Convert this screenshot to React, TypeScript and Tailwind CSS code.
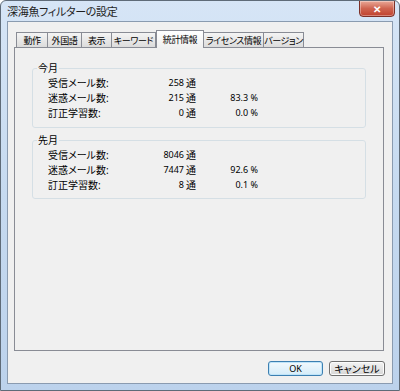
import React from "react";

const tabs = [
  { label: "動作", w: "w-[32px]" },
  { label: "外国語", w: "w-[35px]" },
  { label: "表示", w: "w-[31px]" },
  { label: "キーワード", w: "w-[45px]" },
  { label: "統計情報", w: "w-[48px]", active: true },
  { label: "ライセンス情報", w: "w-[61px]" },
  { label: "バージョン", w: "w-[41px]" },
];

const groups = [
  {
    title: "今月",
    rows: [
      { label: "受信メール数:", count: "258", pct: "" },
      { label: "迷惑メール数:", count: "215", pct: "83.3 %" },
      { label: "訂正学習数:", count: "0", pct: "0.0 %" },
    ],
  },
  {
    title: "先月",
    rows: [
      { label: "受信メール数:", count: "8046", pct: "" },
      { label: "迷惑メール数:", count: "7447", pct: "92.6 %" },
      { label: "訂正学習数:", count: "8", pct: "0.1 %" },
    ],
  },
];

const font = "font-['Noto_Sans','Noto_Sans_CJK_JP',sans-serif] [font-feature-settings:'palt']";

const App = () => {
  return (
    <div
      className={`relative w-[400px] h-[391px] flex flex-col overflow-hidden rounded-t-[6px] border border-[#5f6b78] bg-gradient-to-b from-[#d6e5f6] via-[#c6daf0] to-[#bcd2ec] text-[#000] ${font}`}
    >
      {/* title bar */}
      <div className="h-[20px] flex items-center pl-[6px] text-[11px] tracking-[-0.3px] leading-none text-[#1e1e1e] whitespace-nowrap">
        深海魚フィルターの設定
      </div>
      <div className="absolute top-[-1px] right-[4px] w-[36px] h-[17px] rounded-b-[4px] border border-[#7d3128] bg-gradient-to-b from-[#e9a898] via-[#cf6450] to-[#c0412d] flex items-center justify-center text-white text-[10px] font-bold leading-none shadow-[inset_0_0_0_1px_rgba(255,255,255,0.35)]">
        ✕
      </div>

      {/* client area */}
      <div className="mx-[6px] mb-[6px] flex-1 flex flex-col bg-[#f0f0f0] border border-[#8a9bb0] pt-[8px] pl-[6px] pr-[8px]">
        {/* tab strip */}
        <div className="flex items-end h-[17px] pl-[2px]">
          {tabs.map((t) =>
            t.active ? (
              <div
                key={t.label}
                className={`${t.w} h-[18px] -mb-px relative z-10 border border-b-0 border-[#898c95] bg-gradient-to-b from-[#ffffff] to-[#f0f0f0] flex items-center justify-center text-[9px] tracking-[-0.4px] leading-none whitespace-nowrap`}
              >
                {t.label}
              </div>
            ) : (
              <div
                key={t.label}
                className={`${t.w} h-[15px] border border-b-0 border-[#898c95] -ml-px first:ml-0 bg-gradient-to-b from-[#f4f4f4] to-[#dcdcdc] flex items-center justify-center text-[9px] tracking-[-0.4px] leading-none whitespace-nowrap`}
              >
                {t.label}
              </div>
            )
          )}
        </div>

        {/* panel */}
        <div className="h-[304px] border border-[#898c95] bg-[#f0f0f0] pt-[13px] px-[17px]">
          {groups.map((g, gi) => (
            <fieldset
              key={g.title}
              className={`border border-[#d5dfe5] rounded-[3px] ${gi === 0 ? "pb-[7px]" : "mt-[5px] pb-[6px]"}`}
            >
              <legend className="ml-[4px] px-[1px] h-[14px] text-[10px] leading-[14px]">{g.title}</legend>
              {g.rows.map((r) => (
                <div key={r.label} className="flex items-center h-[15px] pl-[15px] text-[10px] leading-none whitespace-nowrap">
                  <span className="w-[100px]">{r.label}</span>
                  <span className="w-[36px] text-right text-[9px]">{r.count}</span>
                  <span className="ml-[2px]">通</span>
                  <span className="w-[62px] text-right text-[9px]">{r.pct}</span>
                </div>
              ))}
            </fieldset>
          ))}
        </div>

        {/* buttons */}
        <div className="flex justify-end gap-[6px] mt-[10px] -mr-px">
          <button className="w-[55px] h-[15px] rounded-[3px] border border-[#3c7fb1] bg-gradient-to-b from-[#f2f9fd] to-[#d5ecf9] shadow-[inset_0_0_0_1px_#bfe4f9] text-[9px] leading-none">
            OK
          </button>
          <button className="w-[56px] h-[15px] rounded-[3px] border border-[#707070] bg-gradient-to-b from-[#f4f4f4] to-[#d6d6d6] shadow-[inset_0_0_0_1px_#fcfcfc] text-[10px] leading-none whitespace-nowrap">
            キャンセル
          </button>
        </div>
      </div>
    </div>
  );
};

export default App;
